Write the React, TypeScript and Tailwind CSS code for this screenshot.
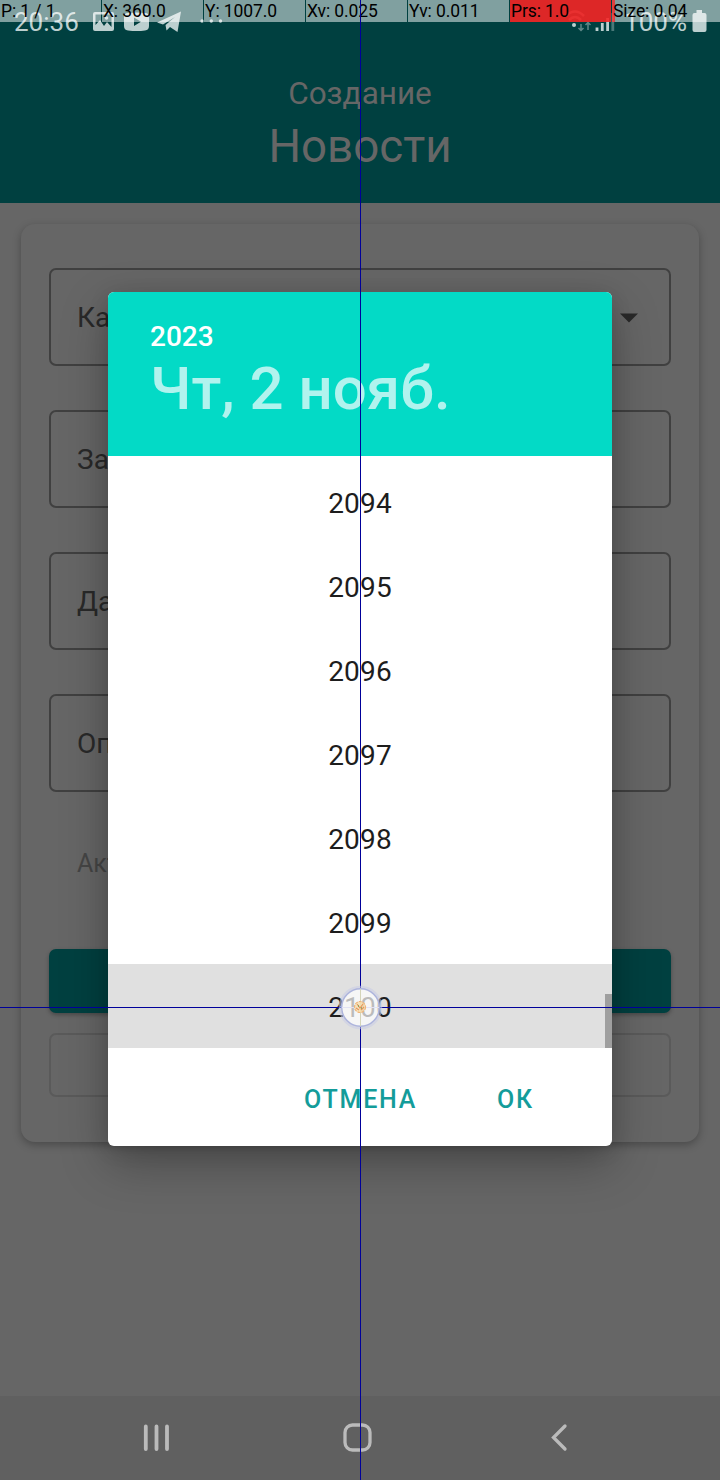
import React from "react";

const years = ["2094", "2095", "2096", "2097", "2098", "2099", "2100"];

function StatusBar() {
  return (
    <div className="flex h-[44px] items-center pl-[14px] pr-[13px] text-left text-[#bccfcf]">
      <span className="w-[79px] shrink-0 pt-px text-[26px] leading-[43px]">20:36</span>
      <svg className="h-[22px] w-[22px]" viewBox="0 0 22 22">
        <path fillRule="evenodd" fill="currentColor" d="M2 1H19a2 2 0 0 1 2 2V18a2 2 0 0 1-2 2H2a2 2 0 0 1-2-2V3a2 2 0 0 1 2-2ZM2.5 3.5V14l4.5-5 4 6 3-4 4.500 5V3.5Z" />
        <circle cx="13.5" cy="7" r="1.8" fill="currentColor" />
      </svg>
      <svg className="ml-[9px] h-[20px] w-[26px]" viewBox="0 0 26 20">
        <path fillRule="evenodd" fill="currentColor" d="M4 1Q13 0 21 1Q25 1 25 5V14Q25 18 21 18.5Q13 19.5 4 18.5Q0 18 0 14V5Q0 1 4 1ZM10 5.5V14L17 9.8Z" />
      </svg>
      <svg className="ml-[7px] h-[22px] w-[25px]" viewBox="0 0 25 22">
        <path fillRule="evenodd" fill="currentColor" d="M0 11.500L24 .5L20.500 21L13 16L9.500 19.500L8.500 14L18 6L6 13.500Z" />
      </svg>
      <svg className="ml-[18px] h-[6px] w-[23px]" viewBox="0 0 23 6">
        <circle cx="2" cy="2" r="1.7" fill="currentColor" />
        <circle cx="11.300" cy="2" r="1.7" fill="currentColor" />
        <circle cx="20.500" cy="2" r="1.7" fill="currentColor" />
      </svg>
      <svg className="ml-auto h-[24px] w-[24px] overflow-visible" viewBox="0 0 24 24">
        <g fill="none" stroke="currentColor" strokeWidth="2.500">
          <path opacity=".65" d="M-4 6Q5 -3 14 6M-1 10Q5 4 11 10" />
          <path opacity=".5" strokeWidth="1.500" d="M11 14V20M8.500 18L11 20.500L13.500 18M18 20V13M15.500 15L18 12.500L20.500 15" />
        </g>
        <circle cx="4" cy="15" r="2" fill="currentColor" />
      </svg>
      <svg className="ml-[1px] h-[22px] w-[20px]" viewBox="0 0 20 22">
        <path stroke="currentColor" strokeWidth="2.800" d="M2 20V16.500M7.300 20V12M12.600 20V7" />
        <path opacity=".4" stroke="currentColor" strokeWidth="2.800" d="M17.800 20V2" />
      </svg>
      <span className="ml-[9px] pt-px text-[26px] leading-[43px]">100%</span>
      <svg className="ml-[5px] h-[24px] w-[15px]" viewBox="0 0 15 24">
        <path fill="currentColor" d="M4.500 0H10V3H12.500Q14.500 3 14.500 5V20Q14.500 22 12.500 22H2.500Q.5 22 .5 20V5Q.5 3 2.500 3H4.500Z" />
      </svg>
    </div>
  );
}

function Field({ label, select = false }: { label: string; select?: boolean }) {
  return (
    <div className="flex h-[98px] items-center justify-between rounded-[7px] border-2 border-[#404040] pl-[26px] pr-[31px]">
      <span className="pt-[2px] text-[28px] leading-none text-[#292929]">{label}</span>
      {select && (
        <svg className="mt-[2px] h-[10px] w-[18px]" viewBox="0 0 18 10">
          <path d="M0 .5H18L9 9.500Z" fill="#292929" />
        </svg>
      )}
    </div>
  );
}

function DatePicker() {
  return (
    <div className="absolute left-[108px] top-[292px] flex h-[854px] w-[504px] flex-col overflow-hidden rounded-[6px] bg-white">
      <header className="h-[164px] bg-[#03dac6] pl-[42px] pt-[28px] font-medium text-white">
        <div className="text-[28px] leading-[33px]">2023</div>
        <div className="pt-px text-[60px] leading-[70px] text-[#b1f3ee]">Чт, 2 нояб.</div>
      </header>
      <div className="relative text-center text-[28px] tracking-[0.200px] text-[#1d1d1d]">
        <ul className="pt-[4px]">
          {years.map((y) => (
            <li key={y} className="h-[84px] pt-[2px] leading-[84px] last:bg-[#e0e0e0]">{y}</li>
          ))}
        </ul>
        <div className="absolute bottom-0 right-0 h-[54px] w-[7px] bg-[#9f9f9f]" />
      </div>
      <footer className="flex h-[98px] items-center pl-[196px] pt-[5px] text-[25px] font-medium tracking-[1.800px] text-[#149c9a]">
        <button className="w-[193px] text-left">ОТМЕНА</button>
        <button>ОК</button>
      </footer>
    </div>
  );
}

function PointerBar() {
  const cell = "w-[101px] bg-white/50 pl-[1px]";
  return (
    <div className="absolute inset-x-0 top-0 flex h-[22px] gap-px whitespace-nowrap text-[17.500px] leading-[22px] tracking-[-0.100px] text-black">
      <div className={cell}>P: 1 / 1</div>
      <div className={cell}>X: 360.0</div>
      <div className={cell}>Y: 1007.0</div>
      <div className={cell}>Xv: 0.025</div>
      <div className={cell}>Yv: 0.011</div>
      <div className="w-[101px] bg-[#f52525]/90 pl-[1px]">Prs: 1.0</div>
      <div className="flex-1 bg-white/50">
        <div className="h-[22px] w-[3px] bg-[#ff2020]/75 pl-px">Size: 0.04</div>
      </div>
    </div>
  );
}

export default function App() {
  return (
    <div className="relative flex h-[1480px] w-[720px] flex-col overflow-hidden bg-[#666666] font-['Roboto',sans-serif]">
      <header className="h-[203px] bg-[#004040] text-center text-[#666666]">
        <StatusBar />
        <div className="pt-[31px] text-[31.500px] leading-[38px]">Создание</div>
        <h1 className="pt-[7px] text-[45.700px] leading-[54px]">Новости</h1>
      </header>
      <main className="mx-[21px] mt-[21px] h-[918px] rounded-[14px] bg-[#666666] px-[28px] pt-[44px] shadow-[0_3px_8px_rgba(0,0,0,0.28)]">
        <div className="flex flex-col gap-[44px]">
          <Field label="Ка" select />
          <Field label="За" />
          <Field label="Да" />
          <Field label="Оп" />
        </div>
        <div className="mt-[57px] h-[100px] pl-[28px] text-[25px] leading-[30px] text-[#454545]">Акт</div>
        <div className="h-[64px] rounded-[7px] bg-[#004040] shadow-[0_2px_4px_rgba(0,0,0,0.3)]" />
        <div className="mt-[20px] h-[64px] rounded-[7px] border-2 border-[#5a5a5a]" />
      </main>
      <nav className="mt-auto flex h-[84px] items-center bg-[#606060] pl-[143px] text-[#bbbbbb]">
        <svg className="h-[30px] w-[28px]" viewBox="0 0 28 30">
          <path d="M2.800 3.500V26M13.500 3.500V26M24 3.500V26" fill="none" stroke="currentColor" strokeWidth="3.800" strokeLinecap="round" />
        </svg>
        <svg className="ml-[171px] h-[30px] w-[30px]" viewBox="0 0 30 30">
          <rect x="3" y="2" width="25" height="25" rx="7.500" fill="none" stroke="currentColor" strokeWidth="3.300" />
        </svg>
        <svg className="ml-[178px] h-[30px] w-[20px]" viewBox="0 0 20 30">
          <path d="M15 3L3.500 14.500L15 26" fill="none" stroke="currentColor" strokeWidth="3.300" strokeLinecap="round" />
        </svg>
      </nav>
      <div className="pointer-events-none absolute left-[108px] top-[292px] h-[854px] w-[504px] rounded-[6px] shadow-[0_18px_48px_rgba(0,0,0,0.28),0_4px_20px_rgba(0,0,0,0.12)]" />
      <DatePicker />
      <div className="pointer-events-none absolute inset-0">
        <PointerBar />
        <div className="absolute left-0 top-[1007px] h-px w-full bg-[#00009a]" />
        <div className="absolute left-[360px] top-0 h-full w-px bg-[#00009a]" />
        <svg className="absolute left-[336px] top-[983px] h-[48px] w-[48px]" viewBox="0 0 48 48">
          <circle cx="24.500" cy="24.500" r="20" fill="none" stroke="#c9cce5" strokeWidth="3.500" opacity=".55" />
          <circle cx="24.500" cy="24.500" r="18.800" fill="#ffffff" fillOpacity=".7" stroke="#adb4dc" strokeWidth="1.500" />
          <path d="M24.500 6V43" stroke="#ddddb0" opacity=".8" />
          <path d="M6 24.500H43" stroke="#f2f2fa" opacity=".75" />
          <circle cx="24" cy="24" r="5.500" fill="#f6dfad" fillOpacity=".8" stroke="#efb478" strokeWidth="1.200" strokeDasharray="3 1" />
          <path d="M21 21L24 25L27 21M20 25L23 27M25 27L28 24" fill="none" stroke="#e8955a" strokeWidth="1.100" />
          <path d="M22 23H23M25 25H26" stroke="#75a05c" strokeWidth="1.300" />
        </svg>
      </div>
    </div>
  );
}
